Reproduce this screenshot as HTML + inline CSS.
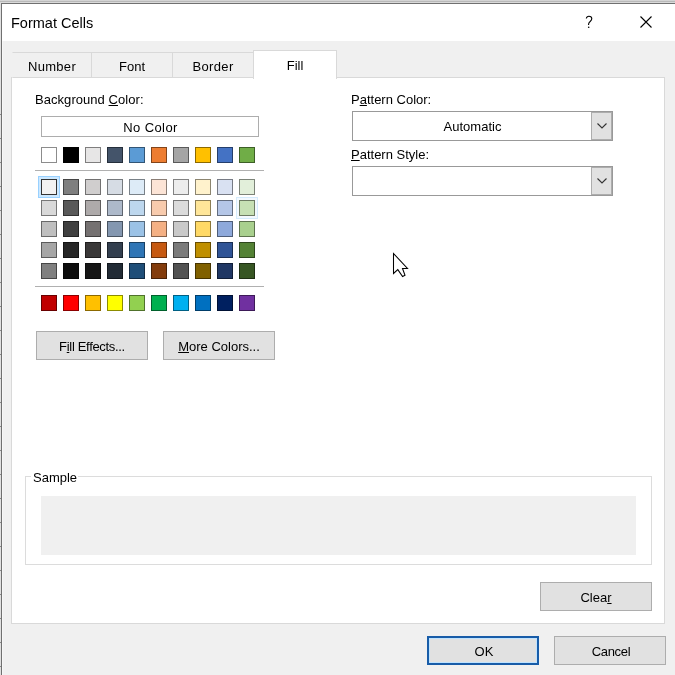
<!DOCTYPE html>
<html><head><meta charset="utf-8"><style>
html,body{margin:0;padding:0;}
body{width:675px;height:675px;position:relative;overflow:hidden;background:#f0f0f0;font-family:"Liberation Sans",sans-serif;}
.b{position:absolute;box-sizing:border-box;}
.t{position:absolute;line-height:1;white-space:nowrap;color:#000;-webkit-font-smoothing:antialiased;will-change:transform;}
.t u{text-decoration:underline;text-underline-offset:1px;}
.sw{position:absolute;box-sizing:border-box;width:16px;height:16px;border:1px solid rgba(0,0,0,.45);}
svg.b{overflow:visible}
</style></head><body>
<div class="b" style="left:0px;top:0px;width:675px;height:1px;background:#d4d4d4;"></div>
<div class="b" style="left:0px;top:1px;width:675px;height:1px;background:#b9b9b9;"></div>
<div class="b" style="left:0px;top:2px;width:675px;height:1px;background:#dadada;"></div>
<div class="b" style="left:0px;top:3px;width:675px;height:672px;background:#e0e0e0;"></div>
<div class="b" style="left:1px;top:3px;width:674px;height:1px;background:#707070;"></div>
<div class="b" style="left:1px;top:3px;width:1px;height:672px;background:#707070;"></div>
<div class="b" style="left:0px;top:114px;width:1px;height:1px;background:#8a8a8a;"></div>
<div class="b" style="left:0px;top:138px;width:1px;height:1px;background:#8a8a8a;"></div>
<div class="b" style="left:0px;top:162px;width:1px;height:1px;background:#8a8a8a;"></div>
<div class="b" style="left:0px;top:186px;width:1px;height:1px;background:#8a8a8a;"></div>
<div class="b" style="left:0px;top:210px;width:1px;height:1px;background:#8a8a8a;"></div>
<div class="b" style="left:0px;top:234px;width:1px;height:1px;background:#8a8a8a;"></div>
<div class="b" style="left:0px;top:258px;width:1px;height:1px;background:#8a8a8a;"></div>
<div class="b" style="left:0px;top:282px;width:1px;height:1px;background:#8a8a8a;"></div>
<div class="b" style="left:0px;top:306px;width:1px;height:1px;background:#8a8a8a;"></div>
<div class="b" style="left:0px;top:330px;width:1px;height:1px;background:#8a8a8a;"></div>
<div class="b" style="left:0px;top:354px;width:1px;height:1px;background:#8a8a8a;"></div>
<div class="b" style="left:0px;top:378px;width:1px;height:1px;background:#8a8a8a;"></div>
<div class="b" style="left:0px;top:402px;width:1px;height:1px;background:#8a8a8a;"></div>
<div class="b" style="left:0px;top:426px;width:1px;height:1px;background:#8a8a8a;"></div>
<div class="b" style="left:0px;top:450px;width:1px;height:1px;background:#8a8a8a;"></div>
<div class="b" style="left:0px;top:474px;width:1px;height:1px;background:#8a8a8a;"></div>
<div class="b" style="left:0px;top:498px;width:1px;height:1px;background:#8a8a8a;"></div>
<div class="b" style="left:0px;top:522px;width:1px;height:1px;background:#8a8a8a;"></div>
<div class="b" style="left:0px;top:546px;width:1px;height:1px;background:#8a8a8a;"></div>
<div class="b" style="left:0px;top:570px;width:1px;height:1px;background:#8a8a8a;"></div>
<div class="b" style="left:0px;top:594px;width:1px;height:1px;background:#8a8a8a;"></div>
<div class="b" style="left:0px;top:618px;width:1px;height:1px;background:#8a8a8a;"></div>
<div class="b" style="left:0px;top:642px;width:1px;height:1px;background:#8a8a8a;"></div>
<div class="b" style="left:0px;top:666px;width:1px;height:1px;background:#8a8a8a;"></div>
<div class="b" style="left:2px;top:4px;width:673px;height:37px;background:#ffffff;"></div>
<div class="b" style="left:2px;top:41px;width:673px;height:634px;background:#f0f0f0;"></div>
<div class="b" style="left:2px;top:41px;width:1px;height:634px;background:#f7f7f7;"></div>
<div class="t" style="left:10.9px;top:15.73px;font-size:14.5px;color:#000;">Format Cells</div>
<svg class="b" style="left:584px;top:14px" width="12" height="16" viewBox="584 14 12 16"><path d="M586.3 18.5C586.6 16.9 587.6 16.2 588.9 16.2C590.6 16.2 591.8 17.3 591.8 18.8C591.8 20.3 590.7 21 589.8 21.8C589 22.5 588.6 23.2 588.6 24.2L588.6 25" stroke="#000" stroke-width="1.1" fill="none"/><circle cx="588.7" cy="27.2" r="0.8" fill="#000"/></svg>
<svg class="b" style="left:640px;top:16px" width="12" height="12" viewBox="0 0 12 12"><path d="M0.5 0.5L11.5 11.5M11.5 0.5L0.5 11.5" stroke="#000" stroke-width="1.1" fill="none"/></svg>
<div class="b" style="left:11px;top:77px;width:654px;height:547px;background:#fff;border:1px solid #d9d9d9;"></div>
<div class="b" style="left:12px;top:52px;width:80px;height:26px;background:#f0f0f0;border:1px solid #d9d9d9;border-left-color:#f0f0f0;"></div>
<div class="b" style="left:91px;top:52px;width:82px;height:26px;background:#f0f0f0;border:1px solid #d9d9d9;"></div>
<div class="b" style="left:172px;top:52px;width:82px;height:26px;background:#f0f0f0;border:1px solid #d9d9d9;"></div>
<div class="b" style="left:253px;top:50px;width:84px;height:29px;background:#fff;border:1px solid #d9d9d9;border-bottom:none;"></div>
<div class="t" style="left:12px;width:80px;text-align:center;top:60.00px;font-size:13px;letter-spacing:0.3px;">Number</div>
<div class="t" style="left:91px;width:82px;text-align:center;top:60.00px;font-size:13px;">Font</div>
<div class="t" style="left:172px;width:82px;text-align:center;top:60.00px;font-size:13px;letter-spacing:0.35px;">Border</div>
<div class="t" style="left:253px;width:84px;text-align:center;top:59.00px;font-size:13px;">Fill</div>
<div class="t" style="left:34.8px;top:93.00px;font-size:13px;color:#000;letter-spacing:0.05px;">Background <u>C</u>olor:</div>
<div class="b" style="left:41px;top:116px;width:218px;height:21px;background:#fff;border:1px solid #adadad;"></div>
<div class="t" style="left:41px;width:219px;text-align:center;top:121.00px;font-size:13px;letter-spacing:0.4px;">No Color</div>
<div class="b" style="left:38px;top:176px;width:22px;height:22px;background:#cce8ff;border:1px solid #99d1ff;"></div>
<div class="b" style="left:236px;top:197px;width:22px;height:22px;background:#f3f9ff;border:1px solid #d5ebfc;"></div>
<div class="sw" style="left:41px;top:147px;background:#FFFFFF;border-color:rgba(0,0,0,0.45)"></div>
<div class="sw" style="left:63px;top:147px;background:#000000;border-color:rgba(0,0,0,0.45)"></div>
<div class="sw" style="left:85px;top:147px;background:#E7E6E6;border-color:rgba(0,0,0,0.45)"></div>
<div class="sw" style="left:107px;top:147px;background:#44546A;border-color:rgba(0,0,0,0.45)"></div>
<div class="sw" style="left:129px;top:147px;background:#5B9BD5;border-color:rgba(0,0,0,0.45)"></div>
<div class="sw" style="left:151px;top:147px;background:#ED7D31;border-color:rgba(0,0,0,0.45)"></div>
<div class="sw" style="left:173px;top:147px;background:#A5A5A5;border-color:rgba(0,0,0,0.45)"></div>
<div class="sw" style="left:195px;top:147px;background:#FFC000;border-color:rgba(0,0,0,0.45)"></div>
<div class="sw" style="left:217px;top:147px;background:#4472C4;border-color:rgba(0,0,0,0.45)"></div>
<div class="sw" style="left:239px;top:147px;background:#70AD47;border-color:rgba(0,0,0,0.45)"></div>
<div class="b" style="left:35px;top:170px;width:229px;height:1px;background:#b0b0b0;"></div>
<div class="sw" style="left:41px;top:179px;background:#F2F2F2;border-color:#333"></div>
<div class="sw" style="left:63px;top:179px;background:#7F7F7F;border-color:rgba(0,0,0,0.45)"></div>
<div class="sw" style="left:85px;top:179px;background:#D0CECE;border-color:rgba(0,0,0,0.45)"></div>
<div class="sw" style="left:107px;top:179px;background:#D6DCE4;border-color:rgba(0,0,0,0.45)"></div>
<div class="sw" style="left:129px;top:179px;background:#DDEBF7;border-color:rgba(0,0,0,0.45)"></div>
<div class="sw" style="left:151px;top:179px;background:#FCE4D6;border-color:rgba(0,0,0,0.45)"></div>
<div class="sw" style="left:173px;top:179px;background:#EDEDED;border-color:rgba(0,0,0,0.45)"></div>
<div class="sw" style="left:195px;top:179px;background:#FFF2CC;border-color:rgba(0,0,0,0.45)"></div>
<div class="sw" style="left:217px;top:179px;background:#D9E1F2;border-color:rgba(0,0,0,0.45)"></div>
<div class="sw" style="left:239px;top:179px;background:#E2EFDA;border-color:rgba(0,0,0,0.45)"></div>
<div class="sw" style="left:41px;top:200px;background:#D9D9D9;border-color:rgba(0,0,0,0.45)"></div>
<div class="sw" style="left:63px;top:200px;background:#595959;border-color:rgba(0,0,0,0.45)"></div>
<div class="sw" style="left:85px;top:200px;background:#AEAAAA;border-color:rgba(0,0,0,0.45)"></div>
<div class="sw" style="left:107px;top:200px;background:#ADB9CA;border-color:rgba(0,0,0,0.45)"></div>
<div class="sw" style="left:129px;top:200px;background:#BDD7EE;border-color:rgba(0,0,0,0.45)"></div>
<div class="sw" style="left:151px;top:200px;background:#F8CBAD;border-color:rgba(0,0,0,0.45)"></div>
<div class="sw" style="left:173px;top:200px;background:#DBDBDB;border-color:rgba(0,0,0,0.45)"></div>
<div class="sw" style="left:195px;top:200px;background:#FFE699;border-color:rgba(0,0,0,0.45)"></div>
<div class="sw" style="left:217px;top:200px;background:#B4C6E7;border-color:rgba(0,0,0,0.45)"></div>
<div class="sw" style="left:239px;top:200px;background:#C6E0B4;border-color:rgba(0,0,0,0.45)"></div>
<div class="sw" style="left:41px;top:221px;background:#BFBFBF;border-color:rgba(0,0,0,0.45)"></div>
<div class="sw" style="left:63px;top:221px;background:#404040;border-color:rgba(0,0,0,0.45)"></div>
<div class="sw" style="left:85px;top:221px;background:#757171;border-color:rgba(0,0,0,0.45)"></div>
<div class="sw" style="left:107px;top:221px;background:#8497B0;border-color:rgba(0,0,0,0.45)"></div>
<div class="sw" style="left:129px;top:221px;background:#9BC2E6;border-color:rgba(0,0,0,0.45)"></div>
<div class="sw" style="left:151px;top:221px;background:#F4B084;border-color:rgba(0,0,0,0.45)"></div>
<div class="sw" style="left:173px;top:221px;background:#C9C9C9;border-color:rgba(0,0,0,0.45)"></div>
<div class="sw" style="left:195px;top:221px;background:#FFD966;border-color:rgba(0,0,0,0.45)"></div>
<div class="sw" style="left:217px;top:221px;background:#8EA9DB;border-color:rgba(0,0,0,0.45)"></div>
<div class="sw" style="left:239px;top:221px;background:#A9D08E;border-color:rgba(0,0,0,0.45)"></div>
<div class="sw" style="left:41px;top:242px;background:#A6A6A6;border-color:rgba(0,0,0,0.45)"></div>
<div class="sw" style="left:63px;top:242px;background:#262626;border-color:rgba(0,0,0,0.45)"></div>
<div class="sw" style="left:85px;top:242px;background:#3A3838;border-color:rgba(0,0,0,0.45)"></div>
<div class="sw" style="left:107px;top:242px;background:#333F4F;border-color:rgba(0,0,0,0.45)"></div>
<div class="sw" style="left:129px;top:242px;background:#2F75B5;border-color:rgba(0,0,0,0.45)"></div>
<div class="sw" style="left:151px;top:242px;background:#C65911;border-color:rgba(0,0,0,0.45)"></div>
<div class="sw" style="left:173px;top:242px;background:#7B7B7B;border-color:rgba(0,0,0,0.45)"></div>
<div class="sw" style="left:195px;top:242px;background:#BF8F00;border-color:rgba(0,0,0,0.45)"></div>
<div class="sw" style="left:217px;top:242px;background:#305496;border-color:rgba(0,0,0,0.45)"></div>
<div class="sw" style="left:239px;top:242px;background:#548235;border-color:rgba(0,0,0,0.45)"></div>
<div class="sw" style="left:41px;top:263px;background:#808080;border-color:rgba(0,0,0,0.45)"></div>
<div class="sw" style="left:63px;top:263px;background:#0D0D0D;border-color:rgba(0,0,0,0.45)"></div>
<div class="sw" style="left:85px;top:263px;background:#161616;border-color:rgba(0,0,0,0.45)"></div>
<div class="sw" style="left:107px;top:263px;background:#222B35;border-color:rgba(0,0,0,0.45)"></div>
<div class="sw" style="left:129px;top:263px;background:#1F4E78;border-color:rgba(0,0,0,0.45)"></div>
<div class="sw" style="left:151px;top:263px;background:#833C0C;border-color:rgba(0,0,0,0.45)"></div>
<div class="sw" style="left:173px;top:263px;background:#525252;border-color:rgba(0,0,0,0.45)"></div>
<div class="sw" style="left:195px;top:263px;background:#806000;border-color:rgba(0,0,0,0.45)"></div>
<div class="sw" style="left:217px;top:263px;background:#203764;border-color:rgba(0,0,0,0.45)"></div>
<div class="sw" style="left:239px;top:263px;background:#375623;border-color:rgba(0,0,0,0.45)"></div>
<div class="b" style="left:35px;top:286px;width:229px;height:1px;background:#b0b0b0;"></div>
<div class="sw" style="left:41px;top:295px;background:#C00000;border-color:rgba(0,0,0,0.45)"></div>
<div class="sw" style="left:63px;top:295px;background:#FF0000;border-color:rgba(0,0,0,0.45)"></div>
<div class="sw" style="left:85px;top:295px;background:#FFC000;border-color:rgba(0,0,0,0.45)"></div>
<div class="sw" style="left:107px;top:295px;background:#FFFF00;border-color:rgba(0,0,0,0.45)"></div>
<div class="sw" style="left:129px;top:295px;background:#92D050;border-color:rgba(0,0,0,0.45)"></div>
<div class="sw" style="left:151px;top:295px;background:#00B050;border-color:rgba(0,0,0,0.45)"></div>
<div class="sw" style="left:173px;top:295px;background:#00B0F0;border-color:rgba(0,0,0,0.45)"></div>
<div class="sw" style="left:195px;top:295px;background:#0070C0;border-color:rgba(0,0,0,0.45)"></div>
<div class="sw" style="left:217px;top:295px;background:#002060;border-color:rgba(0,0,0,0.45)"></div>
<div class="sw" style="left:239px;top:295px;background:#7030A0;border-color:rgba(0,0,0,0.45)"></div>
<div class="b" style="left:36px;top:331px;width:112px;height:29px;background:#e1e1e1;border:1px solid #adadad;box-sizing:border-box;width:112px;height:29px;"></div><div class="t" style="left:36px;width:112px;text-align:center;top:340.00px;font-size:13px;letter-spacing:-0.32px;">F<u>i</u>ll Effects...</div>
<div class="b" style="left:163px;top:331px;width:112px;height:29px;background:#e1e1e1;border:1px solid #adadad;box-sizing:border-box;width:112px;height:29px;"></div><div class="t" style="left:163px;width:112px;text-align:center;top:340.00px;font-size:13px;"><u>M</u>ore Colors...</div>
<div class="t" style="left:350.8px;top:93.00px;font-size:13px;color:#000;">P<u>a</u>ttern Color:</div>
<div class="t" style="left:350.8px;top:148.30px;font-size:13px;color:#000;"><u>P</u>attern Style:</div>
<div class="b" style="left:352px;top:111px;width:261px;height:30px;background:#fff;border:1px solid #999;box-sizing:border-box;width:261px;height:30px;"></div>
<div class="b" style="left:591px;top:112px;width:21px;height:28px;background:#e1e1e1;border:1px solid #adadad;box-sizing:border-box;width:21px;height:28px;"></div>
<svg class="b" style="left:596px;top:122px" width="12" height="7" viewBox="0 0 12 7"><path d="M1.5 1.5L6 6L10.5 1.5" stroke="#333" stroke-width="1.1" fill="none"/></svg>
<div class="b" style="left:352px;top:166px;width:261px;height:30px;background:#fff;border:1px solid #999;box-sizing:border-box;width:261px;height:30px;"></div>
<div class="b" style="left:591px;top:167px;width:21px;height:28px;background:#e1e1e1;border:1px solid #adadad;box-sizing:border-box;width:21px;height:28px;"></div>
<svg class="b" style="left:596px;top:177px" width="12" height="7" viewBox="0 0 12 7"><path d="M1.5 1.5L6 6L10.5 1.5" stroke="#333" stroke-width="1.1" fill="none"/></svg>
<div class="t" style="left:353px;width:239px;text-align:center;top:120.00px;font-size:13px;">Automatic</div>
<svg class="b" style="left:390px;top:250px" width="22" height="30" viewBox="390 250 22 30"><path d="M393.5 253.5L393.5 273.5L397.8 269.6L402.6 276.5L405 275.3L402.5 268.5L407.5 268.4Z" stroke="#000" stroke-width="1.05" fill="#fff" stroke-linejoin="miter"/></svg>
<div class="b" style="left:25px;top:476px;width:627px;height:89px;background:#fff;border:1px solid #dcdcdc;"></div>
<div class="b" style="left:31px;top:470px;width:47px;height:14px;background:#fff"></div>
<div class="t" style="left:33.4px;top:470.80px;font-size:13px;color:#000;">Sample</div>
<div class="b" style="left:41px;top:496px;width:595px;height:59px;background:#f0f0f0;"></div>
<div class="b" style="left:540px;top:582px;width:112px;height:29px;background:#e1e1e1;border:1px solid #adadad;box-sizing:border-box;width:112px;height:29px;"></div><div class="t" style="left:540px;width:112px;text-align:center;top:591.30px;font-size:13px;">Clea<u>r</u></div>
<div class="b" style="left:427px;top:636px;width:112px;height:29px;background:#e1e1e1;border:2px solid #185ca8;box-sizing:border-box;width:112px;height:29px;box-shadow:inset 0 0 0 1px #bfe3ff;"></div><div class="t" style="left:428px;width:112px;text-align:center;top:645.00px;font-size:13px;">OK</div>
<div class="b" style="left:554px;top:636px;width:112px;height:29px;background:#e1e1e1;border:1px solid #adadad;box-sizing:border-box;width:112px;height:29px;"></div><div class="t" style="left:554.8px;width:112.0px;text-align:center;top:645.00px;font-size:13px;letter-spacing:-0.3px;">Cancel</div>
</body></html>
